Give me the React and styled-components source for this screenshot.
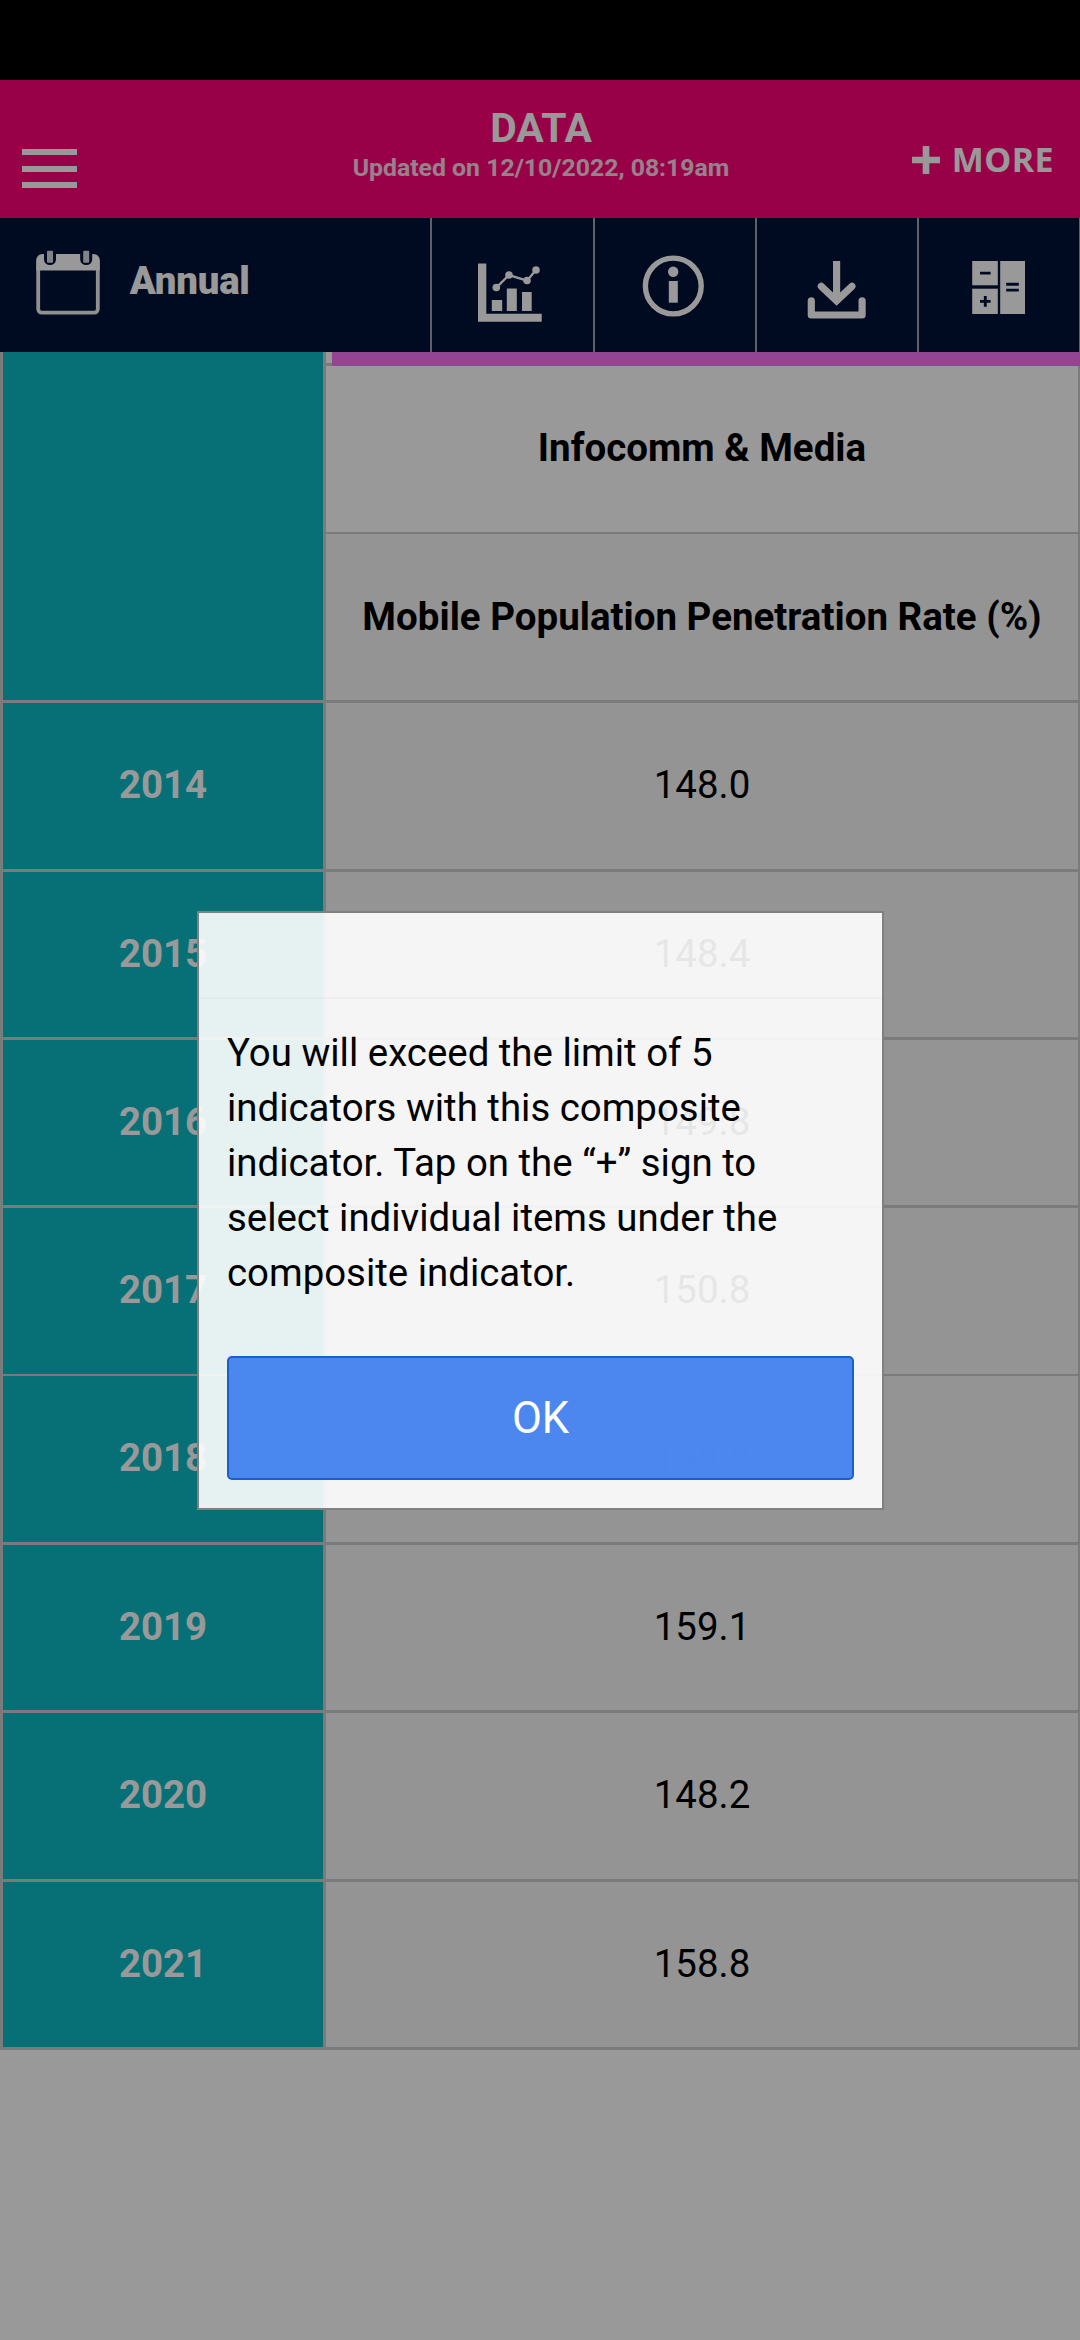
import React from "react";
import styled, { createGlobalStyle } from "styled-components";

const GlobalStyle = createGlobalStyle`
  * { box-sizing: border-box; }
  html, body { margin: 0; padding: 0; background: #fff; }
  body { font-family: Roboto, "Liberation Sans", sans-serif; }
`;

const Screen = styled.div`
  position: relative;
  width: 1080px;
  height: 2340px;
  overflow: hidden;
  background: #fff;
  display: flex;
  flex-direction: column;
`;

const StatusBar = styled.div`
  height: 80px;
  flex: none;
  background: #000;
`;

const Header = styled.header`
  height: 138px;
  flex: none;
  display: grid;
  grid-template-columns: 300px 1fr 300px;
  background: #fd0378;
`;

const MenuButton = styled.button`
  border: 0;
  background: none;
  padding: 69px 0 0 22px;
  display: flex;
  flex-direction: column;
  gap: 10.5px;
`;

const MenuBar = styled.span`
  width: 55px;
  height: 6px;
  background: #fff;
`;

const TitleBlock = styled.div`
  display: flex;
  flex-direction: column;
  align-items: center;
  padding: 24px 0 0 2px;
`;

const Title = styled.h1`
  margin: 0;
  font-size: 40.8px;
  line-height: 48px;
  font-weight: 700;
  color: #fff;
`;

const Updated = styled.div`
  font-size: 24.8px;
  line-height: 32px;
  font-weight: 700;
  white-space: nowrap;
  color: #ffe6f2;
  opacity: 0.93;
`;

const MoreButton = styled.button`
  border: 0;
  background: none;
  padding: 55px 26px 0 0;
  display: flex;
  justify-content: flex-end;
  align-items: flex-start;
  gap: 11px;
  color: #fff;
  font: 700 34px/48px "Open Sans", "Noto Sans", sans-serif;
  letter-spacing: 0.4px;
`;

const PlusIcon = styled.svg`
  margin-top: 10px;
  flex: none;
`;

const Toolbar = styled.nav`
  height: 134px;
  flex: none;
  display: grid;
  grid-template-columns: 430px 163px 162px 162px 162px 1px;
  background: #001137;
`;

const Period = styled.div`
  display: flex;
  align-items: flex-start;
  padding-left: 35.7px;
  gap: 30px;
`;

const PeriodIcon = styled.svg`
  margin-top: 32px;
  flex: none;
`;

const PeriodLabel = styled.span`
  margin-top: 40px;
  font-size: 38.4px;
  line-height: 46px;
  font-weight: 900;
  letter-spacing: -0.2px;
  color: #fff;
`;

const Tool = styled.div`
  border-left: 2px solid #9da0b1;
  overflow: hidden;
`;

const ToolIcon = styled.svg`
  display: block;
`;

const Table = styled.div`
  flex: none;
  display: flex;
  flex-direction: column;
  border-left: 3px solid #cdcdcd;
`;

const HeadRow = styled.div`
  display: flex;
  height: 351px;
`;

const Corner = styled.div`
  width: 323px;
  flex: none;
  background: #0abbc5;
  border-right: 3px solid #cdcdcd;
  border-bottom: 3px solid #cdcdcd;
`;

const HeadCells = styled.div`
  flex: 1;
  display: flex;
  flex-direction: column;
`;

const AccentRow = styled.div`
  height: 14px;
  flex: none;
  display: flex;
  background: #f573f3;
`;

const AccentGap = styled.div`
  width: 6px;
  background: #fff;
  border-bottom: 3px solid #cdcdcd;
`;

const HeadCell = styled.div`
  flex: none;
  height: ${(p) => p.$height}px;
  display: flex;
  align-items: center;
  justify-content: center;
  padding-bottom: ${(p) => p.$lift}px;
  background: ${(p) => p.$bg};
  border-right: 2px solid #cdcdcd;
  border-bottom: ${(p) => p.$line}px solid #cdcdcd;
  font-size: 38.5px;
  line-height: 46px;
  font-weight: 700;
  white-space: nowrap;
  color: #000;
`;

const Row = styled.div`
  display: flex;
  height: ${(p) => p.$height}px;
`;

const cell = `
  display: flex;
  align-items: center;
  justify-content: center;
  padding-bottom: 2px;
  font-size: 38.4px;
  line-height: 46px;
`;

const YearCell = styled.div`
  ${cell}
  width: 323px;
  flex: none;
  background: #0abbc5;
  border-right: 3px solid #cdcdcd;
  border-bottom: ${(p) => p.$line}px solid #cdcdcd;
  color: #fff;
  font-weight: 700;
`;

const ValueCell = styled.div`
  ${cell}
  flex: 1;
  background: #f7f7f7;
  border-right: 2px solid #cdcdcd;
  border-bottom: ${(p) => p.$line}px solid #cdcdcd;
  color: #000;
`;

const Overlay = styled.div`
  position: absolute;
  inset: 0;
  background: rgba(0, 0, 0, 0.4);
  display: flex;
  justify-content: center;
  align-items: flex-start;
  padding: 911px 0 0 1px;
`;

const Dialog = styled.div`
  width: 687px;
  height: 599px;
  border: 2px solid #808080;
  background: rgba(255, 255, 255, 0.9);
  background-clip: padding-box;
  display: flex;
  flex-direction: column;
`;

const DialogHeader = styled.div`
  height: 86px;
  flex: none;
  border-bottom: 2px solid rgba(200, 200, 200, 0.14);
`;

const DialogBody = styled.div`
  flex: 1;
  display: flex;
  flex-direction: column;
  justify-content: space-between;
  padding: 26px 28px 28px;
`;

const Message = styled.p`
  margin: 0;
  font-size: 38.4px;
  line-height: 55px;
  color: #000;
`;

const MessageLine = styled.span`
  display: block;
  white-space: nowrap;
`;

const OkButton = styled.button`
  height: 124px;
  border: 2px solid #1b5fcb;
  border-radius: 5px;
  background: rgba(56, 123, 238, 0.9);
  color: #fff;
  font: 400 43.5px Roboto, "Liberation Sans", sans-serif;
`;

const ROWS = [
  { year: "2014", value: "148.0", height: 169, line: 3 },
  { year: "2015", value: "148.4", height: 168, line: 3 },
  { year: "2016", value: "149.8", height: 168, line: 3 },
  { year: "2017", value: "150.8", height: 168, line: 2 },
  { year: "2018", value: "148.8", height: 169, line: 3 },
  { year: "2019", value: "159.1", height: 168, line: 3 },
  { year: "2020", value: "148.2", height: 169, line: 3 },
  { year: "2021", value: "158.8", height: 168, line: 3 },
];

const LINES = [
  "You will exceed the limit of 5",
  "indicators with this composite",
  "indicator. Tap on the “+” sign to",
  "select individual items under the",
  "composite indicator.",
];

function CalendarIcon() {
  return (
    <PeriodIcon width="64" height="66" viewBox="0 0 64 66" fill="none">
      <rect x="2.2" y="8" width="59.6" height="54.6" rx="3.5" stroke="#f0f0f2" strokeWidth="3.8" />
      <path d="M0.3 10.5Q0.5 4 7 4H57Q63.5 4 63.7 10.5V20.5H0.3Z" fill="#fff" />
      <path d="M8 1V9.5a6 5.5 0 0 0 12 0V1ZM44.2 1V9.5a6 5.5 0 0 0 12 0V1Z" fill="#001137" />
      <rect x="11" y="0.8" width="6" height="12" rx="1" fill="#d9dae0" />
      <rect x="47.2" y="0.8" width="6" height="12" rx="1" fill="#d9dae0" />
    </PeriodIcon>
  );
}

function ChartIcon() {
  return (
    <ToolIcon width="160" height="134" viewBox="432 218 160 134" fill="#fff">
      <path d="M478 263.5h8.3v50.2h55.4v8H478z" />
      <rect x="491.8" y="300" width="10.4" height="11" />
      <rect x="506.8" y="288.5" width="10" height="22.5" />
      <rect x="522" y="292" width="9.7" height="19" />
      <path d="M496.3 287.7L509 275l18 5.7 9-10.7" fill="none" stroke="#fff" strokeWidth="2.4" />
      <circle cx="496.3" cy="287.5" r="3.8" />
      <circle cx="509" cy="275" r="3.8" />
      <circle cx="527" cy="280.5" r="3.8" />
      <circle cx="536" cy="270" r="3.8" />
    </ToolIcon>
  );
}

function InfoIcon() {
  return (
    <ToolIcon width="160" height="134" viewBox="595 218 160 134" fill="#fff">
      <circle cx="673.3" cy="286" r="27.9" fill="none" stroke="#fff" strokeWidth="5.4" />
      <circle cx="673.2" cy="271.7" r="5.2" />
      <rect x="668.8" y="281" width="9" height="21.7" />
    </ToolIcon>
  );
}

function DownloadIcon() {
  return (
    <ToolIcon width="160" height="134" viewBox="757 218 160 134" fill="none" stroke="#fff" strokeWidth="7.2">
      <path d="M836.6 261V300" />
      <path d="M821.3 286.3L836.6 300.8L851.9 286.3" strokeLinecap="round" />
      <path d="M811.3 300.8V315H862.1V300.8" strokeLinecap="round" strokeLinejoin="round" />
    </ToolIcon>
  );
}

function CalculatorIcon() {
  return (
    <ToolIcon width="160" height="134" viewBox="919 218 160 134" fill="#fff">
      <rect x="972.2" y="261" width="25.6" height="24.3" />
      <rect x="972.2" y="288.7" width="25.6" height="25.3" />
      <rect x="1000.2" y="261" width="24.8" height="53" />
      <path
        d="M980 273.1h10.6M980 301.4h10.6M985.3 296v10.8M1006.2 284.3h12.6M1006.2 290.1h12.6"
        fill="none"
        stroke="#001137"
        strokeWidth="2.9"
      />
    </ToolIcon>
  );
}

export default function App() {
  return (
    <Screen>
      <GlobalStyle />
      <StatusBar />
      <Header>
        <MenuButton aria-label="Menu">
          <MenuBar />
          <MenuBar />
          <MenuBar />
        </MenuButton>
        <TitleBlock>
          <Title>DATA</Title>
          <Updated>Updated on 12/10/2022, 08:19am</Updated>
        </TitleBlock>
        <MoreButton>
          <PlusIcon width="30" height="30" viewBox="0 0 30 30">
            <path d="M15 1V29M1 15H29" stroke="#fff" strokeWidth="6.6" />
          </PlusIcon>
          MORE
        </MoreButton>
      </Header>
      <Toolbar>
        <Period>
          <CalendarIcon />
          <PeriodLabel>Annual</PeriodLabel>
        </Period>
        <Tool><ChartIcon /></Tool>
        <Tool><InfoIcon /></Tool>
        <Tool><DownloadIcon /></Tool>
        <Tool><CalculatorIcon /></Tool>
        <Tool />
      </Toolbar>
      <Table>
        <HeadRow>
          <Corner />
          <HeadCells>
            <AccentRow><AccentGap /></AccentRow>
            <HeadCell $height={168} $line={2} $lift={2} $bg="#fff">Infocomm &amp; Media</HeadCell>
            <HeadCell $height={169} $line={3} $lift={0} $bg="#f7f7f7">Mobile Population Penetration Rate (%)</HeadCell>
          </HeadCells>
        </HeadRow>
        {ROWS.map((r) => (
          <Row key={r.year} $height={r.height}>
            <YearCell $line={r.line}>{r.year}</YearCell>
            <ValueCell $line={r.line}>{r.value}</ValueCell>
          </Row>
        ))}
      </Table>
      <Overlay>
        <Dialog role="dialog">
          <DialogHeader />
          <DialogBody>
            <Message>
              {LINES.map((l) => (
                <MessageLine key={l}>{l}</MessageLine>
              ))}
            </Message>
            <OkButton>OK</OkButton>
          </DialogBody>
        </Dialog>
      </Overlay>
    </Screen>
  );
}
